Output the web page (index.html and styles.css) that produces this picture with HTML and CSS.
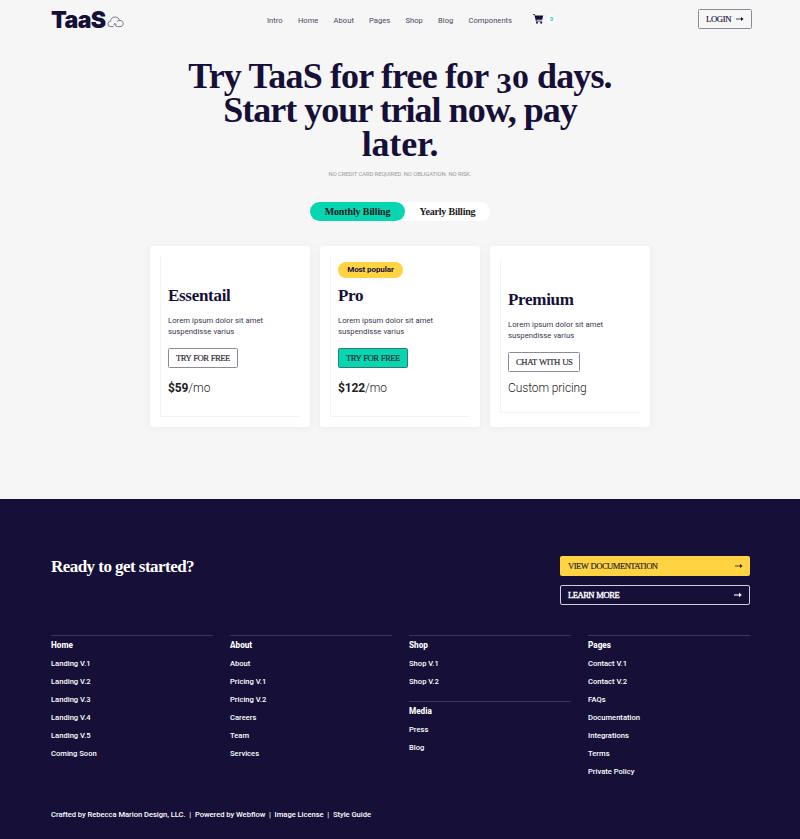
FILE: index.html
```html
<!DOCTYPE html>
<html lang="en">
<head>
<meta charset="utf-8">
<title>TaaS Pricing</title>
<link rel="stylesheet" href="styles.css">
</head>
<body>
<header class="header">
  <a class="logo"><span class="logo-text">TaaS</span>
    <svg class="cloud" width="17" height="12" viewBox="0 0 17 12" fill="none" stroke="#6d6b8a" stroke-width=".9" stroke-linecap="round" stroke-linejoin="round"><path d="M6 10.6H3.4A2.6 2.6 0 0 1 3.6 5.4C3.6 2.6 5.4 1 8 1S12 2.4 12.3 4.4C14.7 4.2 16.2 5.6 16.2 7.6S14.8 10.6 13 10.6H10.4C8.7 10.6 8 9.6 8 7.9M12.3 4.4C11.3 4.4 10.6 4.8 10.2 5.5M6.8 8.7 8 7.5 9.3 8.7"/></svg>
  </a>
  <nav class="nav">
    <a>Intro</a><a>Home</a><a>About</a><a>Pages</a><a>Shop</a><a>Blog</a><a>Components</a>
  </nav>
  <a class="cart">
    <svg width="11" height="10" viewBox="0 0 11 10" fill="#161038"><path d="M0 0H1.7L2.2 1.4H10.2L9.2 5.8H3.5L3.7 6.8H9.1V7.5H3L1.3.7H0Z"/><circle cx="4" cy="8.8" r="1"/><circle cx="8.2" cy="8.8" r="1"/></svg>
    <span class="count">0</span>
  </a>
  <a class="btn login"><span class="t-login">LOGIN</span><svg class="arrow" width="8" height="6" viewBox="0 0 8 6"><path d="M0 3H6" stroke="currentColor" stroke-width=".8"/><path d="M5 1 7.6 3 5 5Z" fill="currentColor"/></svg></a>
</header>
<main class="hero">
  <h1 class="title"><span class="line l1">Try TaaS for free for <span class="old"><span class="digit three">3</span><span class="digit">0</span></span> days.</span> <span class="line l2">Start your trial now, pay</span> <span class="line l3">later.</span></h1>
  <p class="note">NO CREDIT CARD REQUIRED. NO OBLIGATION. NO RISK.</p>
  <div class="toggle"><a class="tab active">Monthly Billing</a><a class="tab">Yearly Billing</a></div>
  <section class="cards">
    <article class="card"><div class="inner">
      <h2 class="plan essential">Essentail</h2>
      <p class="desc">Lorem ipsum dolor sit amet<br>suspendisse varius</p>
      <a class="btn try">TRY FOR FREE</a>
      <p class="price"><b>$59</b>/mo</p>
    </div></article>
    <article class="card"><div class="inner popular">
      <span class="badge">Most popular</span>
      <h2 class="plan pro">Pro</h2>
      <p class="desc">Lorem ipsum dolor sit amet<br>suspendisse varius</p>
      <a class="btn try green">TRY FOR FREE</a>
      <p class="price"><b>$122</b>/mo</p>
    </div></article>
    <article class="card"><div class="inner custom">
      <h2 class="plan premium">Premium</h2>
      <p class="desc">Lorem ipsum dolor sit amet<br>suspendisse varius</p>
      <a class="btn chat">CHAT WITH US</a>
      <p class="price">Custom pricing</p>
    </div></article>
  </section>
</main>
<footer class="footer">
  <div class="cta">
    <h2 class="ready">Ready to get started?</h2>
    <div class="cta-buttons">
      <a class="wide yellow"><span class="t-doc">VIEW DOCUMENTATION</span><svg class="arrow" width="8" height="6" viewBox="0 0 8 6"><path d="M0 3H6" stroke="currentColor" stroke-width=".8"/><path d="M5 1 7.6 3 5 5Z" fill="currentColor"/></svg></a>
      <a class="wide outline"><span class="t-learn">LEARN MORE</span><svg class="arrow" width="8" height="6" viewBox="0 0 8 6"><path d="M0 3H6" stroke="currentColor" stroke-width="1.1"/><path d="M5 .8 7.8 3 5 5.2Z" fill="currentColor"/></svg></a>
    </div>
  </div>
  <div class="columns">
    <div class="col"><div class="group"><b>Home</b><a>Landing V.1</a><a>Landing V.2</a><a>Landing V.3</a><a>Landing V.4</a><a>Landing V.5</a><a>Coming Soon</a></div></div>
    <div class="col"><div class="group"><b>About</b><a>About</a><a>Pricing V.1</a><a>Pricing V.2</a><a>Careers</a><a>Team</a><a>Services</a></div></div>
    <div class="col"><div class="group"><b>Shop</b><a>Shop V.1</a><a>Shop V.2</a></div><div class="group"><b>Media</b><a>Press</a><a>Blog</a></div></div>
    <div class="col"><div class="group"><b>Pages</b><a>Contact V.1</a><a>Contact V.2</a><a>FAQs</a><a>Documentation</a><a>Integrations</a><a>Terms</a><a>Private Policy</a></div></div>
  </div>
  <p class="credits">Crafted by Rebecca Marion Design, LLC.&nbsp; |&nbsp; Powered by Webflow&nbsp; |&nbsp; Image License&nbsp; |&nbsp; Style Guide</p>
</footer>
</body>
</html>
```
FILE: styles.css
```css
* { box-sizing: border-box; }
body { margin: 0; background: #f6f6f6; color: #161038; font-family: Roboto, sans-serif; font-size: 7.6px; }
h1, h2, p { margin: 0; }
a { color: inherit; white-space: nowrap; }
svg { display: block; flex: none; }

.header { height: 40px; display: flex; align-items: center; padding: 0 48px 0 51px; }
.logo { display: flex; align-items: center; gap: 2px; width: 216px; }
.logo-text { font-family: Inter, sans-serif; font-weight: 900; font-size: 23px; line-height: 38px; letter-spacing: -.6px; }
.cloud { margin-top: 4px; }
.nav { display: flex; gap: 15.2px; width: 266px; color: #4a4663; font-size: 7.6px; letter-spacing: .02px; }
.cart { display: flex; align-items: center; gap: 3px; margin-top: -2px; }
.count { width: 9px; height: 9px; border-radius: 5px; background: #fff; color: #08d6b1; font-size: 5.5px; font-weight: 700; line-height: 9px; text-align: center; }
.btn { display: inline-flex; align-items: center; height: 20px; border: 1px solid #8b899a; border-radius: 1.5px; font-family: "Liberation Serif", serif; font-size: 8.7px; line-height: 18px; padding: 0 7px; -webkit-text-stroke: .15px currentColor; letter-spacing: -.55px; word-spacing: .7px; }
.login { width: 54px; margin-left: auto; justify-content: space-between; margin-top: -2px; letter-spacing: -.4px; }

.hero { height: 459px; padding-top: 19px; display: flex; flex-direction: column; align-items: center; }
.title { font: 700 36px/34px "Liberation Serif", serif; text-align: center; white-space: nowrap; }
.line { display: block; height: 34px; }
.l1 { letter-spacing: -.85px; }
.l2 { letter-spacing: -1px; }
.l3 { letter-spacing: -.2px; }
.old { font-size: 26px; line-height: 1; letter-spacing: 0; }
.digit { display: inline-block; width: 17px; line-height: 26px; transform: scaleX(1.3); text-align: center; }
.three { width: 16px; transform: translateY(3.5px) scale(1.2, 1.15); }
.note { margin-top: 7px; font-size: 5.9px; line-height: 12px; height: 12px; color: #999; letter-spacing: -.09px; }
.toggle { display: flex; width: 180px; height: 19px; margin-top: 22px; border-radius: 10px; background: #fff; }
.tab { width: 85px; border-radius: 10px; text-align: center; font: 700 10px/19px "Liberation Serif", serif; letter-spacing: -.2px; color: #1b1923; }
.tab.active { width: 95px; background: #08d6b1; letter-spacing: -.12px; }
.cards { display: flex; gap: 10px; margin-top: 25px; }
.card { width: 160px; height: 181px; padding: 10px; background: #fff; border-radius: 3px; box-shadow: 0 1px 8px rgba(23, 17, 59, .05); }
.inner { height: 161px; border: solid #f3f3f5; border-width: 0 0 1px 1px; padding: 29px 0 0 7px; }
.popular { padding-top: 6px; }
.custom { height: 153px; margin-top: 4px; }
.badge { display: block; width: 65px; height: 16px; margin-bottom: 7px; border-radius: 8px; background: #ffd341; font-weight: 700; font-size: 8px; letter-spacing: -.1px; line-height: 16px; text-align: center; }
.plan { font: 700 17px/22px "Liberation Serif", serif; height: 22px; letter-spacing: -.3px; }
.desc { margin-top: 8px; font-size: 7.7px; line-height: 11px; color: #37334f; letter-spacing: .04px; }
.try, .chat { margin-top: 11px; color: #29262f; }
.try { width: 70px; }
.chat { width: 72px; letter-spacing: -.45px; }
.green { background: #08d6b1; border-color: #36776f; }
.price { margin-top: 10px; font-size: 12px; line-height: 20px; font-weight: 300; color: #222; }
.price b { font-weight: 700; letter-spacing: -.15px; }
.custom .price { margin-top: 6px; letter-spacing: -.1px; }

.footer { height: 340px; padding: 57px 50px 0 51px; background: #161038; color: #fff; }
.cta { display: flex; justify-content: space-between; height: 79px; }
.ready { font: 700 17px/22px "Liberation Serif", serif; letter-spacing: -.54px; }
.cta-buttons { width: 190px; display: flex; flex-direction: column; gap: 9px; }
.wide { display: flex; justify-content: space-between; align-items: center; height: 20px; padding: 0 7px 0 8px; border-radius: 2px; font: 8.6px/19px "Liberation Serif", serif; letter-spacing: -.52px; word-spacing: .7px; -webkit-text-stroke: .15px currentColor; }
.yellow { background: #ffd341; color: #211b30; }
.outline { border: 1px solid #d0ced6; padding: 0 7px; -webkit-text-stroke-width: .35px; }
.columns { display: grid; grid-template-columns: repeat(4, 162px); column-gap: 17px; height: 171px; }
.group { border-top: 1px solid #3c3659; margin-bottom: 11px; font-weight: 500; }
.group b, .group a { display: block; height: 18px; line-height: 19px; }
.group b { font-weight: 800; font-size: 8.2px; }
.credits { line-height: 18px; font-weight: 500; white-space: nowrap; letter-spacing: -.03px; }
```
